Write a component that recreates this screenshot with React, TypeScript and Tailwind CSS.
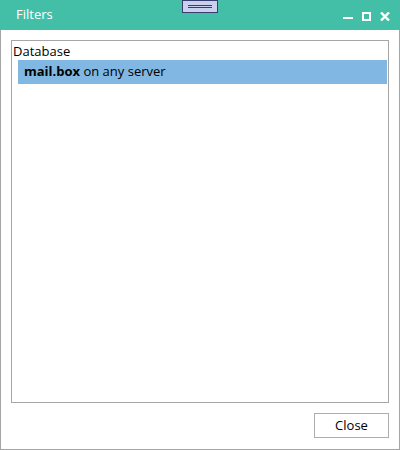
export default function App() {
  return (
    <div
      className="w-[400px] h-[450px] flex flex-col bg-white"
      style={{ fontFamily: '"Open Sans", "Noto Sans", sans-serif' }}
    >
      {/* Title bar */}
      <div className="relative h-[30px] shrink-0 bg-[#43bfa8] flex items-center pl-4 pr-[10px]">
        <span className="text-white text-[13px]">Filters</span>
        <div className="absolute left-[182px] top-0 w-[36px] h-[13px] bg-[#c9d1ef] border border-[#383c6e] flex flex-col items-center justify-center gap-[1px]">
          <div className="w-[24px] h-px bg-[#383c6e]" />
          <div className="w-[24px] h-px bg-[#383c6e]" />
        </div>
        <div className="ml-auto flex items-center gap-[9px] mt-[2px]">
          <svg width="10" height="10" viewBox="0 0 10 10">
            <rect x="0" y="6" width="10" height="2" fill="#fff" />
          </svg>
          <svg width="9" height="9" viewBox="0 0 9 9">
            <rect x="1" y="1" width="7" height="7" fill="none" stroke="#fff" strokeWidth="2" />
          </svg>
          <svg width="10" height="9" viewBox="0 0 10 9">
            <path d="M1 0.5 L9 8.5 M9 0.5 L1 8.5" stroke="#fff" strokeWidth="2.4" />
          </svg>
        </div>
      </div>

      {/* Body */}
      <div className="flex-1 flex flex-col border-x border-b border-[#a6a6a6] px-[10px] pt-[10px] pb-[11px] gap-[10px]">
        <div className="flex-1 border border-[#a6a6a6] pt-[1px]">
          <div className="pl-[1px] h-[18px] leading-[18px] text-[13px] text-black">Database</div>
          <div className="ml-[6px] mr-px h-[24px] bg-[#80b7e3] flex items-center pl-[6px] text-[13px] text-black">
            <span className="font-bold">mail.box</span>
            <span>&nbsp;on any server</span>
          </div>
        </div>
        <div className="flex justify-end">
          <button className="w-[75px] h-[25px] border border-[#adadad] bg-white text-[13px] text-black">
            Close
          </button>
        </div>
      </div>
    </div>
  );
}
